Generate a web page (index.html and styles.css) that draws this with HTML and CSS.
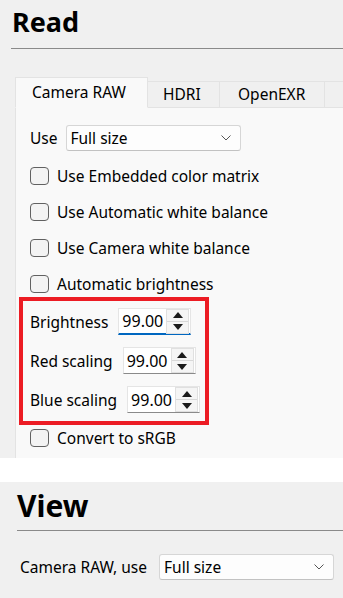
FILE: index.html
```html
<!DOCTYPE html>
<html>
<head>
<meta charset="utf-8">
<link rel="stylesheet" href="styles.css">
</head>
<body>
<section class="read">
  <h1 class="heading read-heading">Read</h1>
  <div class="tabs">
    <div class="tabbar">
      <div class="tab active tab-raw">Camera RAW</div>
      <div class="tab tab-hdri">HDRI</div>
      <div class="tab tab-exr">OpenEXR</div>
      <div class="tab tab-more"></div>
    </div>
    <div class="pane">
      <div class="row use-row">
        <span class="label">Use</span>
        <div class="select"><span>Full size</span>
          <svg class="chev" width="10" height="6" viewBox="0 0 10 6"><path d="M0.5 0.5 L5 5 L9.5 0.5" fill="none" stroke="#555" stroke-width="1"/></svg>
        </div>
      </div>
      <div class="checks">
        <label class="row check"><span class="box"></span><span>Use Embedded color matrix</span></label>
        <label class="row check"><span class="box"></span><span>Use Automatic white balance</span></label>
        <label class="row check"><span class="box"></span><span>Use Camera white balance</span></label>
        <label class="row check"><span class="box"></span><span>Automatic brightness</span></label>
      </div>
      <div class="highlight">
        <div class="spin-row">
          <span class="label">Brightness</span>
          <div class="spin focused"><span class="value">99.00</span>
            <div class="buttons">
              <div class="btn"><svg width="10" height="6" viewBox="0 0 10 6"><path d="M5 0 L10 6 L0 6 Z"/></svg></div>
              <div class="btn"><svg width="10" height="6" viewBox="0 0 10 6"><path d="M0 0 L10 0 L5 6 Z"/></svg></div>
            </div>
          </div>
        </div>
        <div class="spin-row">
          <span class="label">Red scaling</span>
          <div class="spin"><span class="value">99.00</span>
            <div class="buttons">
              <div class="btn"><svg width="10" height="6" viewBox="0 0 10 6"><path d="M5 0 L10 6 L0 6 Z"/></svg></div>
              <div class="btn"><svg width="10" height="6" viewBox="0 0 10 6"><path d="M0 0 L10 0 L5 6 Z"/></svg></div>
            </div>
          </div>
        </div>
        <div class="spin-row">
          <span class="label">Blue scaling</span>
          <div class="spin"><span class="value">99.00</span>
            <div class="buttons">
              <div class="btn"><svg width="10" height="6" viewBox="0 0 10 6"><path d="M5 0 L10 6 L0 6 Z"/></svg></div>
              <div class="btn"><svg width="10" height="6" viewBox="0 0 10 6"><path d="M0 0 L10 0 L5 6 Z"/></svg></div>
            </div>
          </div>
        </div>
      </div>
      <label class="row check last"><span class="box"></span><span>Convert to sRGB</span></label>
    </div>
  </div>
</section>
<div class="gap"></div>
<section class="view">
  <h1 class="heading view-heading">View</h1>
  <div class="row view-row">
    <span class="label">Camera RAW, use</span>
    <div class="select"><span>Full size</span>
      <svg class="chev" width="10" height="6" viewBox="0 0 10 6"><path d="M0.5 0.5 L5 5 L9.5 0.5" fill="none" stroke="#555" stroke-width="1"/></svg>
    </div>
  </div>
</section>
</body>
</html>
```

FILE: styles.css
```css
* { box-sizing: border-box; }
html, body { margin: 0; padding: 0; }
body {
  width: 343px;
  height: 598px;
  overflow: hidden;
  background: #ffffff;
  font-family: "Noto Sans", "Open Sans", sans-serif;
  font-size: 15.5px;
  color: #000;
}
.read {
  background: #f0f0f0;
  padding-left: 11px;
  height: 458px;
  display: flex;
  flex-direction: column;
}
.heading {
  margin: 0;
  font-weight: 700;
  border-bottom: 1px solid #8a8a8a;
  color: #000;
}
.read-heading {
  font-size: 27px;
  line-height: 44px;
  height: 49px;
  padding-left: 1px;
}
.tabs {
  margin-top: 28px;
  margin-left: 4px;
  display: flex;
  flex-direction: column;
  flex: 1;
}
.tabbar {
  display: flex;
  align-items: flex-end;
  height: 31px;
  position: relative;
  z-index: 1;
  margin-bottom: -1px;
  overflow: hidden;
}
.tab {
  height: 27px;
  background: #f0f0f0;
  border: 1px solid #e3e3e3;
  border-left: none;
  display: flex;
  align-items: center;
  padding-bottom: 1px;
  white-space: nowrap;
  flex: none;
}
.tab.active {
  height: 31px;
  background: #f9f9f9;
  border-left: 1px solid #e3e3e3;
  border-bottom-color: #f9f9f9;
  padding-bottom: 2px;
}
.tab-raw { width: 133px; padding-left: 16px; }
.tab-hdri { width: 72px; padding-left: 15px; }
.tab-exr { width: 105px; padding-left: 18px; }
.tab-more { width: 80px; }
.pane {
  flex: 1;
  background: #f9f9f9;
  border-top: 1px solid #e3e3e3;
  border-left: 1px solid #e3e3e3;
  padding: 12px 0 0 14px;
  display: flex;
  flex-direction: column;
}
.row {
  display: flex;
  align-items: center;
  height: 36px;
}
.use-row { gap: 8px; }
.select {
  width: 175px;
  height: 26px;
  background: #fdfdfd;
  border: 1px solid #d6d6d6;
  border-bottom-color: #c2c2c2;
  border-radius: 3px;
  display: flex;
  align-items: center;
  justify-content: space-between;
  padding: 0 9px 0 4px;
}
.checks {
  margin-top: 2px;
  display: flex;
  flex-direction: column;
}
.check { gap: 8px; }
.box {
  width: 19px;
  height: 18px;
  border: 1px solid #616161;
  border-radius: 4px;
  background: #f3f3f3;
  flex: none;
}
.highlight {
  margin-top: -5px;
  margin-left: -11px;
  width: 190px;
  border: 4px solid #ec1c24;
  padding: 1px 0 2px 7px;
  display: flex;
  flex-direction: column;
}
.spin-row {
  display: flex;
  align-items: center;
  height: 39px;
  gap: 10px;
}
.spin {
  width: 73px;
  height: 27px;
  background: #ffffff;
  border: 1px solid #e5e5e5;
  border-bottom: 1px solid #8a8a8a;
  display: flex;
  align-items: center;
  justify-content: space-between;
  padding: 0 1px 0 3px;
}
.spin.focused {
  border-bottom: 2px solid #0067c0;
}
.value { font-size: 16px; }
.buttons {
  width: 23px;
  height: 25px;
  display: flex;
  flex-direction: column;
  border: 1px solid #e0e0e0;
  background: #f5f5f5;
}
.btn {
  flex: 1;
  display: flex;
  align-items: center;
  justify-content: center;
}
.btn + .btn { border-top: 1px solid #d8d8d8; }
.btn svg path { fill: #1a1a1a; }
.check.last { height: 25px; }
.gap { height: 24px; background: #ffffff; }
.view {
  background: #f0f0f0;
  height: 116px;
  padding-left: 17px;
}
.view-heading {
  font-size: 30px;
  line-height: 46px;
  height: 49px;
  padding-top: 1px;
}
.view-row {
  margin-top: 22px;
  padding-left: 3px;
  height: 28px;
  gap: 12px;
}
.view-row .select { width: 175px; }
```
